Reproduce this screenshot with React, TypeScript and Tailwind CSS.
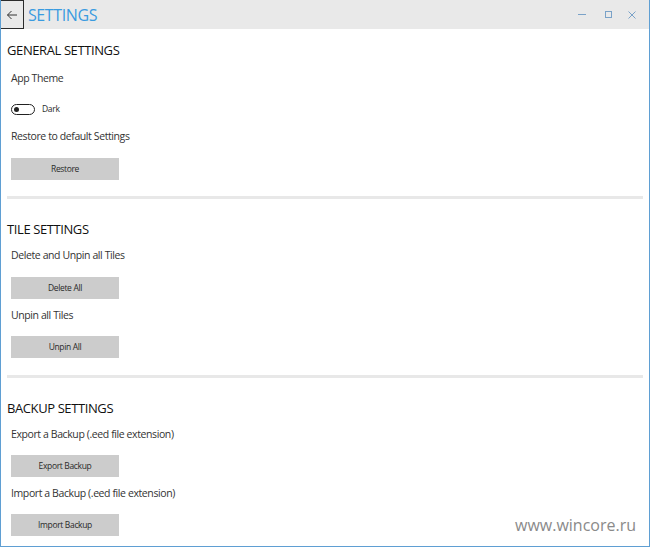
import React from "react";

const font = { fontFamily: '"Open Sans", "Noto Sans", sans-serif' };

function Btn({ label }: { label: string }) {
  return (
    <div className="w-[108px] h-[22px] bg-[#cccccc] flex items-center justify-center text-[8.5px] tracking-[-0.35px] text-[#2a2a2a]">
      {label}
    </div>
  );
}

function Label({ children }: { children: React.ReactNode }) {
  return <div className="pl-[11px] text-[10.5px] tracking-[-0.4px] leading-[14px] text-[#333]">{children}</div>;
}

function Heading({ children }: { children: React.ReactNode }) {
  return <div className="pl-[7px] text-[13px] tracking-[-0.4px] leading-[18px] text-[#111]">{children}</div>;
}

function Sep() {
  return <div className="mx-[7px] h-[3px] bg-[#e8e8e8]" />;
}

export default function App() {
  return (
    <div className="w-[650px] h-[547px] bg-white relative overflow-hidden" style={font}>
      <div className="absolute inset-0 border-l border-r border-b border-[#5f9fd3] pointer-events-none z-10" />
      {/* title bar */}
      <div className="h-[29px] bg-[#e9e9e9] flex items-center">
        <div className="w-[24px] h-[29px] border border-[#2b2b2b] flex items-center justify-center">
          <svg width="12" height="10" viewBox="0 0 12 10" fill="none" stroke="#333" strokeWidth="1">
            <path d="M11 5H1.5M5.5 1L1.5 5l4 4" />
          </svg>
        </div>
        <div className="ml-[4px] text-[16px] tracking-[-0.4px] leading-[20px] text-[#3a9be0]">SETTINGS</div>
        <div className="ml-auto flex items-center h-full pr-[8px]">
          <div className="w-[27px] flex justify-center">
            <div className="w-[8px] h-px bg-[#7aa2c8]" />
          </div>
          <div className="w-[27px] flex justify-center">
            <div className="w-[7px] h-[7px] border border-[#7aa2c8]" />
          </div>
          <div className="w-[20px] flex justify-center">
            <svg width="8" height="8" viewBox="0 0 8 8" stroke="#7aa2c8" strokeWidth="1">
              <path d="M0.5 0.5l7 7M7.5 0.5l-7 7" />
            </svg>
          </div>
        </div>
      </div>

      <div className="pt-[12px]">
        <Heading>GENERAL SETTINGS</Heading>
        <div className="h-[12px]" />
        <Label>App Theme</Label>
        <div className="h-[18px]" />
        <div className="pl-[11px] flex items-center h-[12px]">
          <div className="w-[24px] h-[11px] rounded-full border border-[#222] flex items-center pl-[2px]">
            <div className="w-[5px] h-[5px] rounded-full bg-[#222]" />
          </div>
          <span className="ml-[7px] text-[8.5px] tracking-[-0.3px] text-[#2a2a2a]">Dark</span>
        </div>
        <div className="h-[14px]" />
        <Label>Restore to default Settings</Label>
        <div className="h-[15px]" />
        <div className="pl-[11px]"><Btn label="Restore" /></div>
        <div className="h-[16px]" />
        <Sep />

        <div className="h-[21px]" />
        <Heading>TILE SETTINGS</Heading>
        <div className="h-[10px]" />
        <Label>Delete and Unpin all Tiles</Label>
        <div className="h-[15px]" />
        <div className="pl-[11px]"><Btn label="Delete All" /></div>
        <div className="h-[9px]" />
        <Label>Unpin all Tiles</Label>
        <div className="h-[14px]" />
        <div className="pl-[11px]"><Btn label="Unpin All" /></div>
        <div className="h-[17px]" />
        <Sep />

        <div className="h-[21px]" />
        <Heading>BACKUP SETTINGS</Heading>
        <div className="h-[10px]" />
        <Label>Export a Backup (.eed file extension)</Label>
        <div className="h-[14px]" />
        <div className="pl-[11px]"><Btn label="Export Backup" /></div>
        <div className="h-[9px]" />
        <Label>Import a Backup (.eed file extension)</Label>
        <div className="h-[14px]" />
        <div className="pl-[11px]"><Btn label="Import Backup" /></div>
      </div>

      <div className="absolute right-[14px] bottom-[10px] text-[16px] text-[#8a8a8a]">
        www.wincore.ru
      </div>
    </div>
  );
}
